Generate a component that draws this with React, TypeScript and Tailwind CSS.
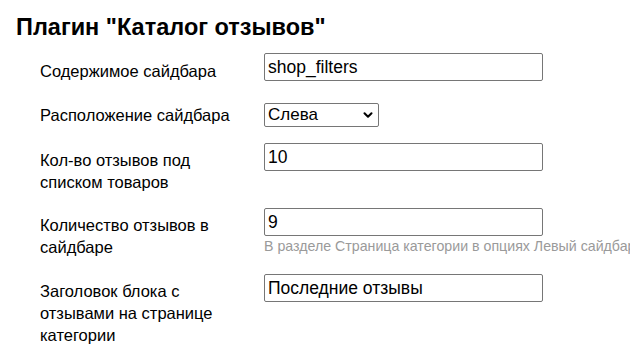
import { ChevronDown } from "lucide-react";

const font = { fontFamily: '"Liberation Sans", Arial, sans-serif' };

function TextField({ value }: { value: string }) {
  return (
    <input
      type="text"
      defaultValue={value}
      className="w-[279px] h-[28px] border border-[#767676] rounded-[2px] px-[3px] text-[17.5px] text-black outline-none bg-white"
    />
  );
}

export default function App() {
  return (
    <div
      className="w-[630px] h-[357px] overflow-hidden bg-white text-black"
      style={font}
    >
      <h1 className="pl-4 pt-[14px] text-[23.5px] leading-[27px] font-bold">
        Плагин "Каталог отзывов"
      </h1>

      <div className="pl-10 mt-[12px] text-[16.5px] leading-[22px]">
        {/* sidebar content */}
        <div className="flex">
          <div className="w-[224px] shrink-0 pt-[7px]">Содержимое сайдбара</div>
          <TextField value="shop_filters" />
        </div>

        {/* sidebar position */}
        <div className="flex mt-[21px]">
          <div className="w-[224px] shrink-0 pt-px">Расположение сайдбара</div>
          <div className="relative w-[115px] h-[24px]">
            <select
              defaultValue="left"
              className="appearance-none w-full h-full border border-[#767676] rounded-[2px] pl-[3px] text-[17px] bg-white outline-none"
            >
              <option value="left">Слева</option>
              <option value="right">Справа</option>
            </select>
            <ChevronDown
              className="absolute right-[4px] top-[5px] w-[14px] h-[14px] pointer-events-none"
              strokeWidth={3.5}
            />
          </div>
        </div>

        {/* reviews under product list */}
        <div className="flex mt-[16px]">
          <div className="w-[224px] shrink-0 pt-[6px] pr-10">Кол-во отзывов под списком товаров</div>
          <TextField value="10" />
        </div>

        {/* reviews in sidebar */}
        <div className="flex mt-[15px]">
          <div className="w-[224px] shrink-0 pt-[6px] pr-10">Количество отзывов в сайдбаре</div>
          <div className="flex flex-col">
            <TextField value="9" />
            <div className="mt-[1px] text-[14.2px] leading-[18px] text-[#9a9a9a] whitespace-nowrap">
              В разделе Страница категории в опциях Левый сайдбар
            </div>
          </div>
        </div>

        {/* block title */}
        <div className="flex mt-[16px]">
          <div className="w-[224px] shrink-0 pt-[6px] pr-10">
            Заголовок блока с отзывами на странице категории
          </div>
          <TextField value="Последние отзывы" />
        </div>
      </div>
    </div>
  );
}
